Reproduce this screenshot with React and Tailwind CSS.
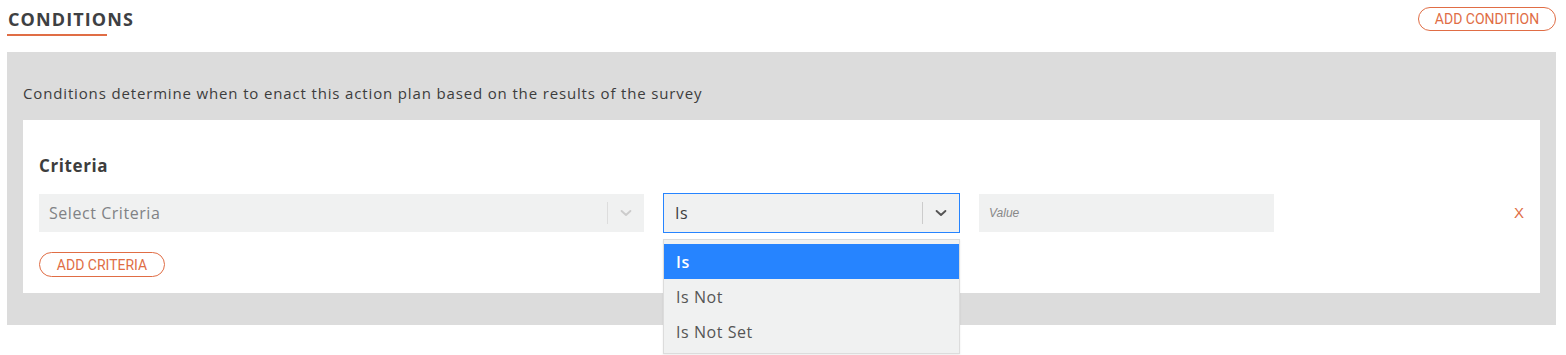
function Chevron({ dark }) {
    return (
        <svg width="16" height="16" viewBox="0 0 20 20" className={dark ? 'text-[#555]' : 'text-[#ccc]'}>
            <path d="M4.5 7.5 L10 12.5 L15.5 7.5" fill="none" stroke="currentColor" strokeWidth="2.4" strokeLinecap="round" strokeLinejoin="round" />
        </svg>
    );
}

export default function App() {
    const options = ['Is', 'Is Not', 'Is Not Set'];

    return (
        <div className="w-[1566px] h-[355px] bg-white relative font-['Open_Sans',sans-serif] text-[#3d3d3d]">
            <div className="flex items-start justify-between pl-[8px] pr-[10px] pt-[7px] h-[52px]">
                <div className="flex flex-col">
                    <h2 className="text-[18px] font-bold uppercase tracking-[1.1px] leading-[22px] text-[#3e4042] mt-[1px]">Conditions</h2>
                    <div className="h-[2px] w-[100px] bg-[#e06d45] mt-[4px] -ml-[1px]"></div>
                </div>
                <button className="h-[24px] w-[138px] rounded-full border border-[#e06d45] text-[#e06d45] text-[14px] font-['Roboto',sans-serif] uppercase leading-none">
                    Add Condition
                </button>
            </div>

            <div className="mx-[7px] mr-[10px] bg-[#dcdcdc] h-[273px] px-[16px] pt-[31px]">
                <p className="text-[15px] text-[#3d3d3d] leading-[20px] tracking-[0.85px]">
                    Conditions determine when to enact this action plan based on the results of the survey
                </p>
                <div className="bg-white mt-[17px] h-[173px] px-[16px] pt-[35px]">
                    <h3 className="text-[17px] font-bold leading-[22px] tracking-[0.6px] text-[#3d3d3d]">Criteria</h3>
                    <div className="flex items-center mt-[16px]">
                        <div className="w-[605px] h-[38px] bg-[#f0f1f1] flex items-center pl-[10px]">
                            <span className="flex-1 text-[16px] tracking-[0.55px] text-[#808285]">Select Criteria</span>
                            <div className="w-px h-[22px] bg-[#ddd]"></div>
                            <div className="w-[36px] flex justify-center"><Chevron /></div>
                        </div>
                        <div className="relative ml-[19px]">
                            <div className="w-[297px] h-[40px] bg-[#f0f1f1] border border-[#2684ff] flex items-center pl-[11px]">
                                <span className="flex-1 text-[16px] tracking-[0.55px] text-[#3d3d3d]">Is</span>
                                <div className="w-px h-[22px] bg-[#ccc]"></div>
                                <div className="w-[36px] flex justify-center"><Chevron dark /></div>
                            </div>
                            <div className="absolute left-0 top-[46px] w-[297px] bg-[#f0f1f1] border border-[#dcdcdc] py-[4px] z-10 shadow-[0_1px_2px_rgba(0,0,0,0.08)]">
                                {options.map((o, i) => (
                                    <div
                                        key={o}
                                        className={i === 0
                                            ? 'h-[35px] flex items-center pl-[12px] bg-[#2684ff] text-white font-semibold text-[16px] tracking-[0.55px]'
                                            : 'h-[35px] flex items-center pl-[12px] text-[#555] text-[16px] tracking-[0.55px]'}
                                    >
                                        {o}
                                    </div>
                                ))}
                            </div>
                        </div>
                        <div className="ml-[19px] w-[295px] h-[38px] bg-[#f0f1f1] flex items-center pl-[10px]">
                            <span className="text-[12px] italic text-[#888] font-['Liberation_Sans',sans-serif]">Value</span>
                        </div>
                        <div className="flex-1 flex justify-end">
                            <span className="text-[#e06d45] text-[15px] font-['Liberation_Sans',sans-serif]">X</span>
                        </div>
                    </div>
                    <button className="mt-[19px] h-[25px] w-[126px] rounded-full border border-[#e06d45] text-[#e06d45] text-[14px] font-['Roboto',sans-serif] uppercase leading-none">
                        Add Criteria
                    </button>
                </div>
            </div>
        </div>
    );
}
